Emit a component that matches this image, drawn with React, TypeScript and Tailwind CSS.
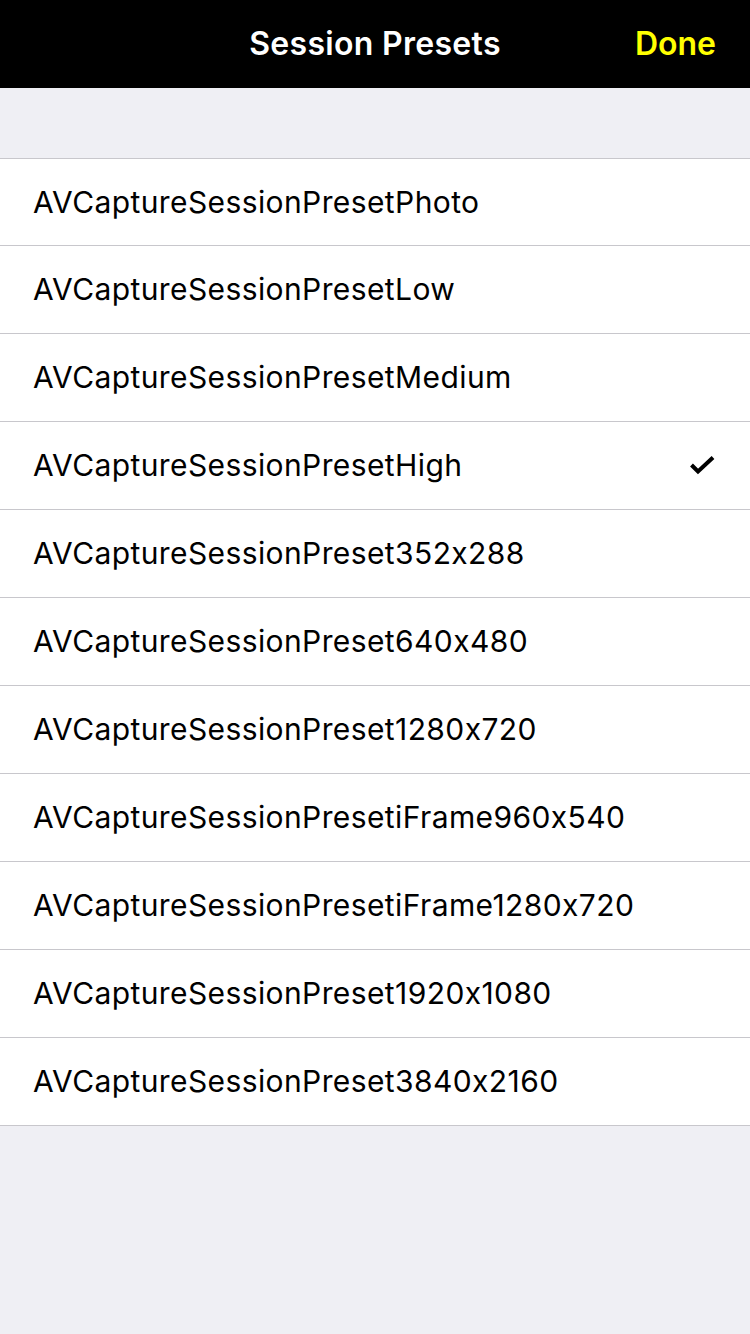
import React from "react";

const items = [
  "AVCaptureSessionPresetPhoto",
  "AVCaptureSessionPresetLow",
  "AVCaptureSessionPresetMedium",
  "AVCaptureSessionPresetHigh",
  "AVCaptureSessionPreset352x288",
  "AVCaptureSessionPreset640x480",
  "AVCaptureSessionPreset1280x720",
  "AVCaptureSessionPresetiFrame960x540",
  "AVCaptureSessionPresetiFrame1280x720",
  "AVCaptureSessionPreset1920x1080",
  "AVCaptureSessionPreset3840x2160",
];

export default function App() {
  return (
    <div
      className="w-[750px] h-[1334px] bg-[#efeff4] flex flex-col [font-feature-settings:'calt'_0]"
      style={{ fontFamily: "Inter, 'Noto Sans', sans-serif" }}
    >
      <div className="h-[88px] bg-black relative flex items-center justify-center">
        <span className="text-white text-[32px] font-semibold tracking-[0.3px]">Session Presets</span>
        <span className="absolute right-[34px] text-[#ffff00] text-[32px] font-semibold">Done</span>
      </div>
      <div className="h-[70px]" />
      <div className="bg-white border-t border-b border-[#c8c7cc]">
        {items.map((t, i) => (
          <div
            key={t}
            className={`pl-[33px] ${i === 0 ? "h-[86px]" : "h-[88px] border-t border-[#c8c7cc]"}`}
          >
            <div className="h-full flex items-center pr-[34px]">
              <span className="flex-1 text-black text-[30px] tracking-[0.4px]">{t}</span>
              {i === 3 && (
                <svg width="28" height="22" viewBox="0 0 28 22" className="mt-[1px]">
                  <path d="M3.5 10 L10 16.5 L25 2.5" stroke="black" strokeWidth="4" fill="none" strokeLinecap="butt" strokeLinejoin="miter" />
                </svg>
              )}
            </div>
          </div>
        ))}
      </div>
    </div>
  );
}
